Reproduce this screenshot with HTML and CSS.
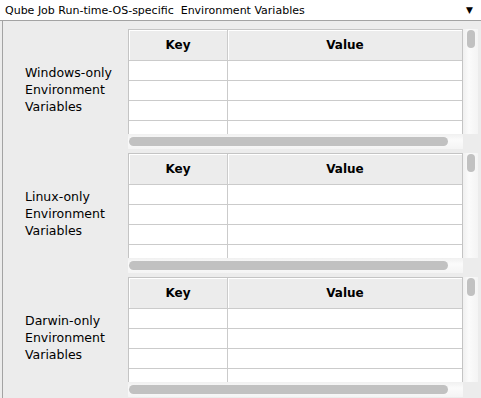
FILE: index.html
```html
<!DOCTYPE html>
<html lang="en">
<head>
    <meta charset="UTF-8">
    <title>Qube Job Run-time-OS-specific Environment Variables</title>
    <link rel="stylesheet" href="styles.css">
</head>
<body>
    <div class="titlebar">
        <span class="title">Qube Job Run-time-OS-specific&nbsp; Environment Variables</span>
        <span class="arrow">&#9660;</span>
    </div>

    <div class="panel">
        <div class="section">
            <div class="label">Windows-only<br>Environment<br>Variables</div>
            <div class="table-box">
                <div class="viewport">
                    <table>
                        <thead>
                            <tr><th class="key">Key</th><th>Value</th></tr>
                        </thead>
                        <tbody>
                            <tr><td class="key"></td><td></td></tr>
                            <tr><td class="key"></td><td></td></tr>
                            <tr><td class="key"></td><td></td></tr>
                            <tr><td class="key"></td><td></td></tr>
                        </tbody>
                    </table>
                </div>
                <div class="vscroll"><div class="vthumb"></div></div>
                <div class="hscroll"><div class="hthumb"></div></div>
                <div class="corner"></div>
            </div>
        </div>

        <div class="section">
            <div class="label">Linux-only<br>Environment<br>Variables</div>
            <div class="table-box">
                <div class="viewport">
                    <table>
                        <thead>
                            <tr><th class="key">Key</th><th>Value</th></tr>
                        </thead>
                        <tbody>
                            <tr><td class="key"></td><td></td></tr>
                            <tr><td class="key"></td><td></td></tr>
                            <tr><td class="key"></td><td></td></tr>
                            <tr><td class="key"></td><td></td></tr>
                        </tbody>
                    </table>
                </div>
                <div class="vscroll"><div class="vthumb"></div></div>
                <div class="hscroll"><div class="hthumb"></div></div>
                <div class="corner"></div>
            </div>
        </div>

        <div class="section">
            <div class="label">Darwin-only<br>Environment<br>Variables</div>
            <div class="table-box">
                <div class="viewport">
                    <table>
                        <thead>
                            <tr><th class="key">Key</th><th>Value</th></tr>
                        </thead>
                        <tbody>
                            <tr><td class="key"></td><td></td></tr>
                            <tr><td class="key"></td><td></td></tr>
                            <tr><td class="key"></td><td></td></tr>
                            <tr><td class="key"></td><td></td></tr>
                        </tbody>
                    </table>
                </div>
                <div class="vscroll"><div class="vthumb"></div></div>
                <div class="hscroll"><div class="hthumb"></div></div>
                <div class="corner"></div>
            </div>
        </div>
    </div>
</body>
</html>
```

FILE: styles.css
```css
body {
    margin: 0;
    width: 481px;
    height: 398px;
    overflow: hidden;
    background: #ececec;
    color: #000;
    font-family: 'DejaVu Sans', sans-serif;
}

.titlebar {
    display: flex;
    justify-content: space-between;
    align-items: center;
    height: 20px;
    padding: 0 8px 0 5px;
    background: #fff;
    border-bottom: 1px solid #a3a3a3;
    font-size: 11px;
}

.arrow {
    font-size: 9px;
}

.panel {
    margin-left: 2px;
    border-left: 1px solid #a3a3a3;
    padding-top: 8px;
    height: 369px;
    overflow: hidden;
}

.section {
    display: flex;
    align-items: center;
    margin-bottom: 4px;
}

.label {
    flex-shrink: 0;
    width: 125px;
    padding-left: 22px;
    box-sizing: border-box;
    font-size: 12.5px;
    line-height: 17px;
    white-space: nowrap;
}

.table-box {
    flex-shrink: 0;
    display: grid;
    grid-template-columns: 335px 15px;
    grid-template-rows: 105px 15px;
}

.viewport {
    border: 1px solid #c4c4c4;
    border-bottom: none;
    overflow: hidden;
    background: #fff;
}

table {
    width: 100%;
    border-collapse: collapse;
    table-layout: fixed;
}

th,
td {
    padding: 0;
    border-bottom: 1px solid #cbcbcb;
}

th {
    height: 30px;
    background: #ececec;
    font-size: 12px;
    font-weight: bold;
    box-shadow: inset 1px 1px 0 #fff;
}

td {
    height: 19px;
}

.key {
    width: 98px;
    border-right: 1px solid #cbcbcb;
}

.vscroll {
    background: linear-gradient(to right, #f0f0f0, #fbfbfb 40%, #f4f4f4);
    padding: 1px 0 0 4px;
}

.vthumb {
    width: 8px;
    height: 18px;
    border-radius: 4px;
    background: #c1c1c1;
}

.hscroll {
    background: linear-gradient(to bottom, #f0f0f0, #fbfbfb 40%, #f4f4f4);
    padding: 3px 0 0 1px;
}

.hthumb {
    width: 319px;
    height: 9px;
    border-radius: 5px;
    background: #c1c1c1;
}

.corner {
    background: #ececec;
}
```
